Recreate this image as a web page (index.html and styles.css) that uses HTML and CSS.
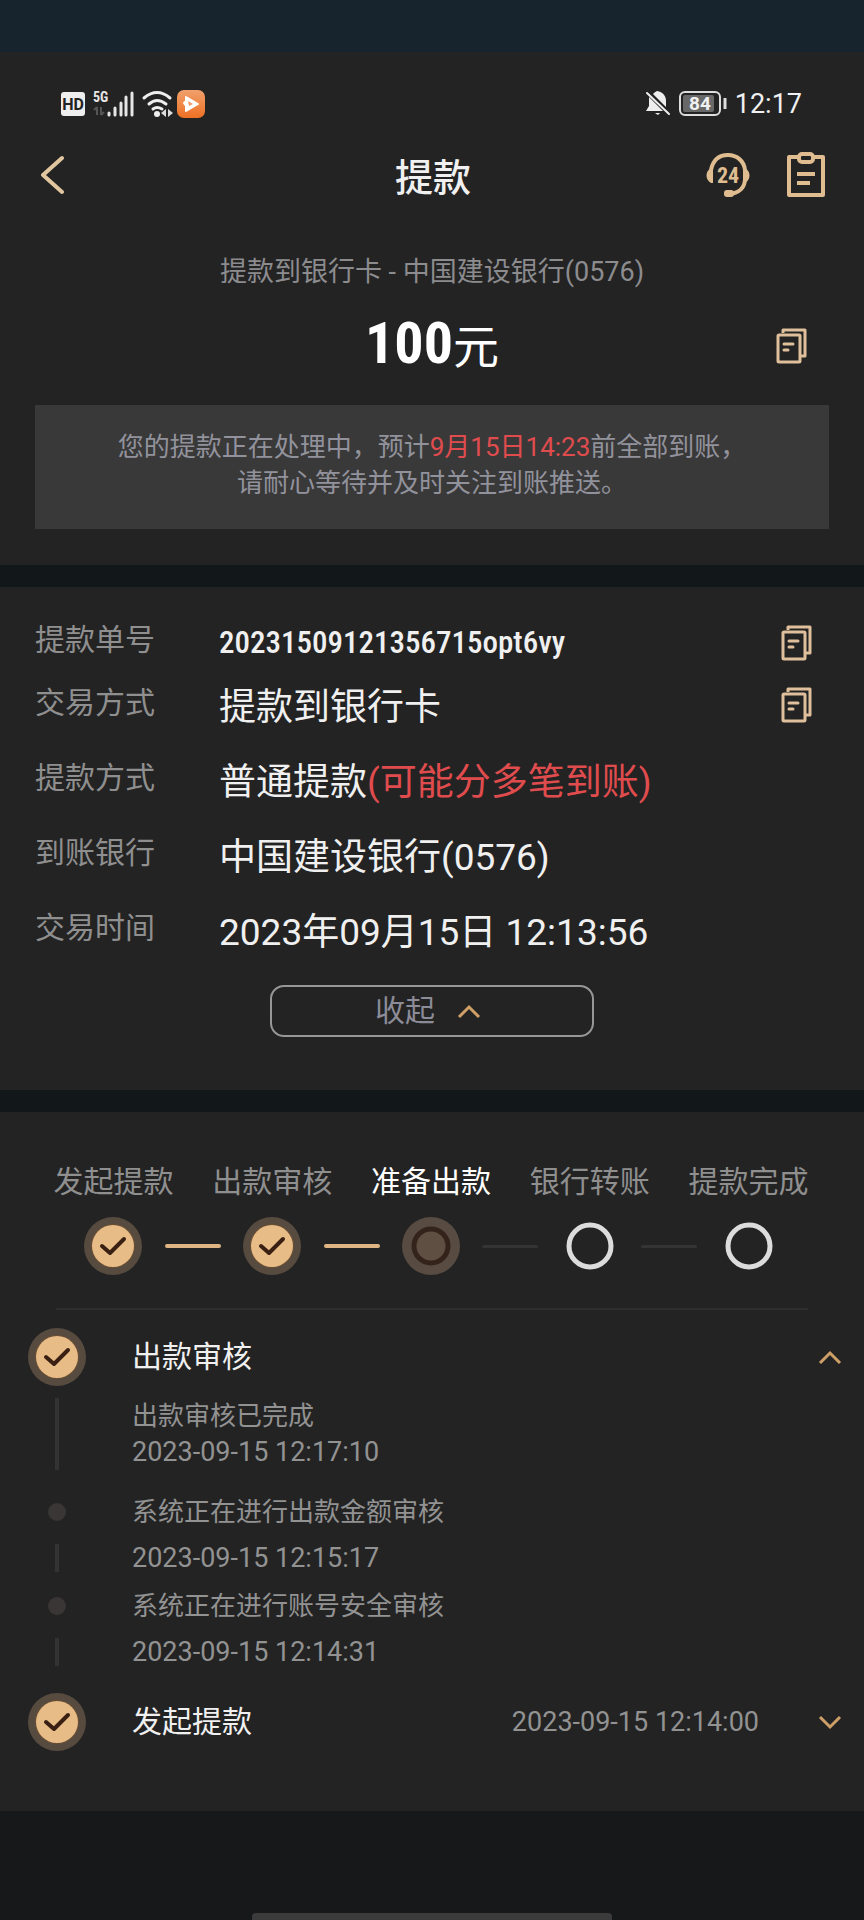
FILE: index.html
```html
<!DOCTYPE html>
<html lang="zh-CN">
<head>
<meta charset="utf-8">
<meta name="viewport" content="width=device-width, initial-scale=1">
<title>提款</title>
<link rel="stylesheet" href="styles.css">
</head>
<body>
<svg class="defs" aria-hidden="true">
  <symbol id="copy" viewBox="0 0 31 36">
    <path d="M7 5V2h22v26h-4" fill="none" stroke="currentColor" stroke-width="3" stroke-linejoin="round"/>
    <rect x="2" y="7" width="22" height="27" rx="1" fill="none" stroke="currentColor" stroke-width="3"/>
    <path d="M8 16h9M8 22h4" fill="none" stroke="currentColor" stroke-width="3" stroke-linecap="round"/>
  </symbol>
  <symbol id="done" viewBox="0 0 58 58">
    <circle cx="29" cy="29" r="29" fill="#574b40"/>
    <circle cx="29" cy="29" r="22" fill="#6a4f35"/>
    <circle cx="29" cy="29" r="21" fill="#e7bc87"/>
    <path d="M18 29l8 7 14-14" fill="none" stroke="#3a2013" stroke-width="4" stroke-linecap="round" stroke-linejoin="round"/>
  </symbol>
  <symbol id="current" viewBox="0 0 58 58">
    <circle cx="29" cy="29" r="29" fill="#574b42"/>
    <circle cx="29" cy="29" r="17" fill="#5f4f42" stroke="#33231a" stroke-width="5"/>
  </symbol>
  <symbol id="pending" viewBox="0 0 58 58">
    <circle cx="29" cy="29" r="21" fill="none" stroke="#dcdcdc" stroke-width="5"/>
  </symbol>
  <symbol id="up" viewBox="0 0 24 15">
    <path d="M2 13L12 3l10 10" fill="none" stroke="currentColor" stroke-width="3"/>
  </symbol>
  <symbol id="down" viewBox="0 0 24 15">
    <path d="M2 2l10 10L22 2" fill="none" stroke="currentColor" stroke-width="3"/>
  </symbol>
</svg>

<div class="strip"></div>

<main class="page">
  <section class="panel summary">
    <div class="status">
      <div class="status-left">
        <svg width="26" height="26" viewBox="0 0 26 26" role="img" aria-label="HD">
          <rect x="1" y="1" width="24" height="24" rx="3" fill="#eee"/>
          <text x="13" y="19" class="hd" text-anchor="middle">HD</text>
        </svg>
        <svg width="42" height="28" viewBox="0 0 42 28" role="img" aria-label="5G">
          <text x="0" y="12" class="fiveg">5G</text>
          <path d="M4 17v8M4 17l-3 3M8 25v-8M8 25l3-3" stroke="#555" stroke-width="2" fill="none"/>
          <path d="M16 23v2M22 18v7M28 13v12M33 7v18M39 3v22" stroke="#e6e6e6" stroke-width="3" stroke-linecap="round"/>
        </svg>
        <svg class="wifi" width="28" height="28" viewBox="0 0 28 28" role="img" aria-label="WiFi">
          <path d="M2 8q13-11 26 0M7 14q8-7 17 0M11 19q4-3 9 0" fill="none" stroke="#eee" stroke-width="3" stroke-linecap="round"/>
          <circle cx="15" cy="24" r="3" fill="#eee"/>
          <path d="M24 19v8l-5-4zM26 19v8l5-4z" fill="#ddd"/>
        </svg>
        <svg width="28" height="28" viewBox="0 0 28 28" role="img" aria-label="视频">
          <defs><linearGradient id="og" x1="0" y1="0" x2="0" y2="1"><stop offset="0" stop-color="#f0a06c"/><stop offset="1" stop-color="#ef7024"/></linearGradient></defs>
          <rect width="28" height="28" rx="7" fill="url(#og)"/>
          <path d="M9 7l12 7-12 7v-5l-2-3 2-2z" fill="#fff" stroke="#fff" stroke-width="2" stroke-linejoin="round"/>
          <path d="M11 11l5 3-4 2z" fill="#ef9a6a"/>
        </svg>
      </div>
      <div class="status-right">
        <svg width="26" height="28" viewBox="0 0 26 28" role="img" aria-label="静音">
          <path d="M12 1c6 1 9 5 9 10v6l-13-13c1-1 2-2 4-3zM4 7l14 14H1l3-5zM10 23h5l-2 2z" fill="#eee"/>
          <path d="M2 3l22 21" stroke="#eee" stroke-width="2" stroke-linecap="round"/>
        </svg>
        <svg width="50" height="28" viewBox="0 0 50 28" role="img" aria-label="电量 84">
          <rect x="2" y="2" width="40" height="23" rx="5" fill="none" stroke="#ddd" stroke-width="2"/>
          <rect x="5" y="5" width="31" height="17" rx="2" fill="#686868"/>
          <path d="M47 8v11" stroke="#ddd" stroke-width="3"/>
          <text x="22" y="20" class="batt" text-anchor="middle">84</text>
        </svg>
        <span class="clock">12:17</span>
      </div>
    </div>

    <header class="header">
      <button class="icon-btn" aria-label="返回">
        <svg width="24" height="46" viewBox="0 0 24 46"><path d="M22 6L3 23l19 17" fill="none" stroke="#e2c6a0" stroke-width="4" stroke-linejoin="round" stroke-linecap="round"/></svg>
      </button>
      <h1 class="title">提款</h1>
      <div class="actions">
        <button class="icon-btn" aria-label="24小时客服">
          <svg width="44" height="46" viewBox="0 0 44 46">
            <path d="M5 18C7 8 13 3 22 3s16 6 17 15M39 28c-1 9-6 13-16 14" fill="none" stroke="#dfbd90" stroke-width="4"/>
            <path d="M7 16v15H5c-6-3-6-12 0-15zM37 16v15h2c6-3 6-12 0-15z" fill="#dfbd90"/>
            <rect x="18" y="38" width="10" height="7" rx="3" fill="#dfbd90"/>
            <text x="22" y="31" class="svc" text-anchor="middle">24</text>
          </svg>
        </button>
        <button class="icon-btn" aria-label="提款记录">
          <svg width="40" height="46" viewBox="0 0 40 46" fill="none" stroke="#dfbd90" stroke-width="4">
            <path d="M12 5H3v38h34V5h-9" stroke-linejoin="round"/>
            <rect x="13" y="2" width="14" height="8" rx="3"/>
            <path d="M11 22h18M11 31h13"/>
          </svg>
        </button>
      </div>
    </header>

    <p class="subtitle">提款到银行卡 - 中国建设银行(0576)</p>
    <div class="amount-row">
      <p class="amount"><span class="number">100</span>元</p>
      <button class="icon-btn copy" aria-label="复制金额"><svg width="31" height="36"><use href="#copy"/></svg></button>
    </div>
    <p class="notice">您的提款正在处理中，预计<span class="red">9月15日14:23</span>前全部到账，<br>请耐心等待并及时关注到账推送。</p>
  </section>

  <section class="panel details">
    <dl class="rows">
      <div class="row tight">
        <dt>提款单号</dt><dd class="order">20231509121356715opt6vy</dd>
        <dd class="tool"><button class="icon-btn copy" aria-label="复制提款单号"><svg width="31" height="36"><use href="#copy"/></svg></button></dd>
      </div>
      <div class="row">
        <dt>交易方式</dt><dd>提款到银行卡</dd>
        <dd class="tool"><button class="icon-btn copy" aria-label="复制交易方式"><svg width="31" height="36"><use href="#copy"/></svg></button></dd>
      </div>
      <div class="row"><dt>提款方式</dt><dd>普通提款<span class="red">(可能分多笔到账)</span></dd></div>
      <div class="row"><dt>到账银行</dt><dd>中国建设银行(0576)</dd></div>
      <div class="row"><dt>交易时间</dt><dd>2023年09月15日 12:13:56</dd></div>
    </dl>
    <button class="collapse">收起<svg class="chev" width="24" height="15"><use href="#up"/></svg></button>
  </section>

  <section class="panel progress">
    <ol class="steps">
      <li>发起提款</li>
      <li>出款审核</li>
      <li class="active">准备出款</li>
      <li>银行转账</li>
      <li>提款完成</li>
    </ol>
    <div class="track" aria-hidden="true">
      <svg width="58" height="58"><use href="#done"/></svg>
      <span class="link lit"></span>
      <svg width="58" height="58"><use href="#done"/></svg>
      <span class="link lit"></span>
      <svg width="58" height="58"><use href="#current"/></svg>
      <span class="link"></span>
      <svg width="58" height="58"><use href="#pending"/></svg>
      <span class="link"></span>
      <svg width="58" height="58"><use href="#pending"/></svg>
    </div>
    <hr class="divider">

    <div class="timeline">
      <div class="head">
        <svg width="58" height="58" aria-hidden="true"><use href="#done"/></svg>
        <h2>出款审核</h2>
        <button class="icon-btn chev" aria-label="收起出款审核"><svg width="24" height="15"><use href="#up"/></svg></button>
      </div>
      <div class="event first">
        <span class="bar long"></span>
        <div><p>出款审核已完成</p><time>2023-09-15 12:17:10</time></div>
      </div>
      <div class="event">
        <span class="dot"></span><p>系统正在进行出款金额审核</p>
        <span class="bar"></span><time>2023-09-15 12:15:17</time>
      </div>
      <div class="event">
        <span class="dot"></span><p>系统正在进行账号安全审核</p>
        <span class="bar"></span><time>2023-09-15 12:14:31</time>
      </div>
      <div class="head last">
        <svg width="58" height="58" aria-hidden="true"><use href="#done"/></svg>
        <h2>发起提款</h2>
        <time>2023-09-15 12:14:00</time>
        <button class="icon-btn chev" aria-label="展开发起提款"><svg width="24" height="15"><use href="#down"/></svg></button>
      </div>
    </div>
  </section>
</main>

<footer class="home"><span class="home-bar"></span></footer>
</body>
</html>
```
FILE: styles.css
```css
* {
  box-sizing: border-box;
}

body {
  margin: 0;
  min-height: 100vh;
  display: flex;
  flex-direction: column;
  background: #17181a;
  color: #f0f0f0;
  font-family: Roboto, "Noto Sans CJK SC", sans-serif;
  font-size: 26px;
  line-height: 36px;
}

h1, h2, p, dl, dd, ol {
  margin: 0;
  padding: 0;
}

svg {
  display: block;
  flex: none;
}

.defs {
  position: absolute;
  width: 0;
  height: 0;
}

.red {
  color: #e04c4e;
}

.strip {
  height: 52px;
  background: #17242e;
}

.page {
  display: flex;
  flex-direction: column;
  gap: 22px;
  background: #12171a;
}

.panel {
  background: #232323;
}

.icon-btn {
  display: flex;
  padding: 0;
  border: 0;
  background: none;
}

.copy {
  color: #e0c09c;
}

.chev {
  color: #cf9f68;
}

/* Status bar */
.status {
  display: flex;
  justify-content: space-between;
  padding: 38px 62px 0 60px;
}

.status-left,
.status-right {
  display: flex;
  align-items: center;
  height: 28px;
  gap: 7px;
}

.wifi {
  overflow: visible;
}

.hd {
  font: 700 16px Roboto, sans-serif;
  fill: #232323;
}

.fiveg {
  font: 700 14px "Roboto Condensed", Roboto, sans-serif;
  fill: #e6e6e6;
}

.batt {
  font: 700 19px Roboto, sans-serif;
  fill: #f0f0f0;
}

.svc {
  font: 700 22px "Roboto Condensed", Roboto, sans-serif;
  fill: #dfbd90;
}

.clock {
  font-size: 27px;
}

/* Title bar */
.header {
  display: grid;
  grid-template-columns: 1fr auto 1fr;
  align-items: start;
  padding: 34px 38px 0 40px;
}

.title {
  font-size: 38px;
  font-weight: 500;
  line-height: 52px;
}

.actions {
  display: flex;
  justify-content: flex-end;
  gap: 36px;
}

/* Summary */
.summary {
  padding-bottom: 36px;
}

.subtitle {
  margin-top: 50px;
  font-size: 27px;
  text-align: center;
  color: #8c8c8f;
}

.amount-row {
  display: grid;
  grid-template-columns: 1fr auto 1fr;
  align-items: center;
  height: 60px;
  margin: 24px 57px 0;
}

.amount {
  grid-column: 2;
  font-size: 46px;
  line-height: 60px;
  color: #fff;
}

.number {
  font-family: "Roboto Condensed", "Liberation Sans Narrow", sans-serif;
  font-size: 58px;
  font-weight: 700;
  line-height: 1;
}

.amount-row .copy {
  justify-self: end;
}

.notice {
  margin: 31px 35px 0;
  padding: 24px 0 28px;
  background: #393939;
  text-align: center;
  color: #92929c;
}

/* Details */
.details {
  padding: 29px 35px 53px;
}

.rows {
  display: flex;
  flex-direction: column;
  gap: 17px;
  margin-right: 17px;
}

.row {
  display: grid;
  grid-template-columns: 184px 1fr auto;
  align-items: start;
}

.row.tight {
  margin-bottom: -6px;
}

.row dt {
  font-size: 30px;
  line-height: 48px;
  color: #8f8f8f;
}

.row dd {
  font-size: 37px;
  line-height: 58px;
}

.row .order {
  font-family: "Roboto Condensed", "Liberation Sans Narrow", sans-serif;
  font-size: 31px;
  font-weight: 500;
  line-height: 54px;
}

.row .tool {
  display: flex;
  align-items: center;
  height: 52px;
}

.row.tight .tool {
  height: 54px;
}

.row.tight {
  height: 52px;
}

.collapse {
  display: flex;
  align-items: center;
  justify-content: center;
  gap: 22px;
  width: 324px;
  height: 52px;
  margin: 23px auto 0;
  padding: 0 8px 0 0;
  border: 2px solid #979797;
  border-radius: 14px;
  background: none;
  font: 30px/40px Roboto, "Noto Sans CJK SC", sans-serif;
  color: #8b8c98;
}

/* Progress */
.progress {
  padding: 50px 0 60px;
}

.steps {
  display: grid;
  grid-template-columns: repeat(5, 1fr);
  margin: 0 36px 0 34px;
  list-style: none;
  text-align: center;
  font-size: 30px;
  line-height: 40px;
  color: #8f8f8f;
}

.steps .active {
  color: #fff;
}

.track {
  display: flex;
  align-items: center;
  justify-content: space-between;
  margin: 15px 2px 0 0;
  padding: 0 calc(10% - 2px);
}

.link {
  width: 56px;
  height: 3px;
  border-radius: 2px;
  background: #343434;
}

.link.lit {
  height: 4px;
  background: #dfb483;
}

.divider {
  height: 2px;
  margin: 33px 56px 18px;
  border: 0;
  background: #2f2f2f;
}

.timeline {
  padding: 0 22px 0 28px;
}

.head {
  display: flex;
  align-items: center;
}

.head h2 {
  flex: 1;
  margin-left: 46px;
  font-size: 30px;
  font-weight: 400;
  line-height: 40px;
}

.head.last {
  margin-top: 23px;
}

.head time {
  margin-right: 59px;
}

time {
  display: block;
  font-size: 27px;
  color: #929292;
}

.event {
  display: grid;
  grid-template-columns: 58px 1fr;
  column-gap: 46px;
  row-gap: 10px;
  align-items: center;
  justify-items: start;
  margin-top: 12px;
  color: #929292;
}

.event.first {
  margin-bottom: 24px;
}

.bar,
.dot {
  justify-self: center;
}

.bar {
  width: 4px;
  height: 28px;
  background: #333;
}

.bar.long {
  height: 72px;
}

.dot {
  width: 18px;
  height: 18px;
  border-radius: 50%;
  background: #393635;
}

.event.first + .event {
  margin-top: 0;
}

/* Gesture bar */
.home {
  flex: 1;
  display: flex;
  align-items: flex-end;
  justify-content: center;
}

.home-bar {
  width: 360px;
  height: 7px;
  border-radius: 4px 4px 0 0;
  background: #3b3b3c;
}
```
